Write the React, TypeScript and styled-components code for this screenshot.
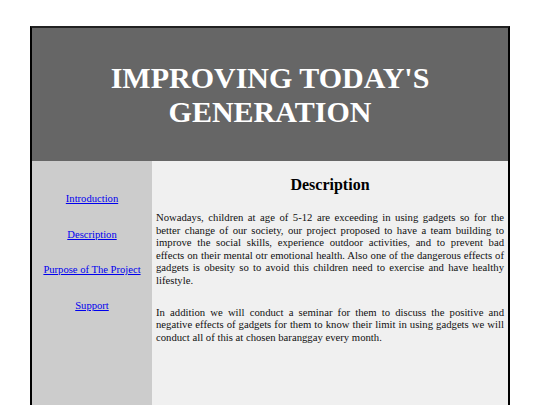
import React from "react";
import styled, { createGlobalStyle } from "styled-components";

const GlobalStyle = createGlobalStyle`
  html, body {
    margin: 0;
    padding: 0;
    background: #ffffff;
  }
  body {
    font-family: "Liberation Serif", "Times New Roman", serif;
  }
`;

const links = ["Introduction", "Description", "Purpose of The Project", "Support"];

const App: React.FC = () => {
  return (
    <>
      <GlobalStyle />
      <Page>
        <Header>
          <Title>
            IMPROVING TODAY'S
            <br />
            GENERATION
          </Title>
        </Header>
        <Body>
          <Sidebar>
            {links.map((l) => (
              <NavLink key={l} href="#">
                {l}
              </NavLink>
            ))}
          </Sidebar>
          <Content>
            <Heading>Description</Heading>
            <Para>
              Nowadays, children at age of 5-12 are exceeding in using gadgets so
              for the better change of our society, our project proposed to have a
              team building to improve the social skills, experience outdoor
              activities, and to prevent bad effects on their mental otr emotional
              health. Also one of the dangerous effects of gadgets is obesity so to
              avoid this children need to exercise and have healthy lifestyle.
            </Para>
            <Para>
              In addition we will conduct a seminar for them to discuss the
              positive and negative effects of gadgets for them to know their
              limit in using gadgets we will conduct all of this at chosen
              baranggay every month.
            </Para>
          </Content>
        </Body>
      </Page>
    </>
  );
};

const Page = styled.div`
  margin: 26px auto 0;
  width: 480px;
  box-sizing: border-box;
  border: 2px solid #000;
  border-top-color: #222;
`;

const Header = styled.header`
  background: #666666;
  height: 133px;
  display: flex;
  align-items: center;
  justify-content: center;
`;

const Title = styled.h1`
  margin: 0;
  color: #ffffff;
  font-size: 30px;
  font-weight: bold;
  line-height: 34px;
  text-align: center;
`;

const Body = styled.div`
  display: flex;
  min-height: 260px;
`;

const Sidebar = styled.nav`
  width: 120px;
  flex-shrink: 0;
  background: #cccccc;
  display: flex;
  flex-direction: column;
  align-items: center;
  gap: 23.5px;
  padding-top: 32px;
`;

const NavLink = styled.a`
  color: #0000ee;
  text-decoration: underline;
  font-size: 10.6px;
  line-height: 12px;
`;

const Content = styled.main`
  flex: 1;
  background: #f0f0f0;
  padding: 15px 4px 0 4px;
`;

const Heading = styled.h2`
  margin: 0 0 17px;
  font-size: 16px;
  font-weight: bold;
  text-align: center;
  line-height: 18px;
`;

const Para = styled.p`
  margin: 0 0 19px;
  font-size: 10.7px;
  line-height: 12.6px;
  text-align: justify;
  color: #111;
`;

export default App;
